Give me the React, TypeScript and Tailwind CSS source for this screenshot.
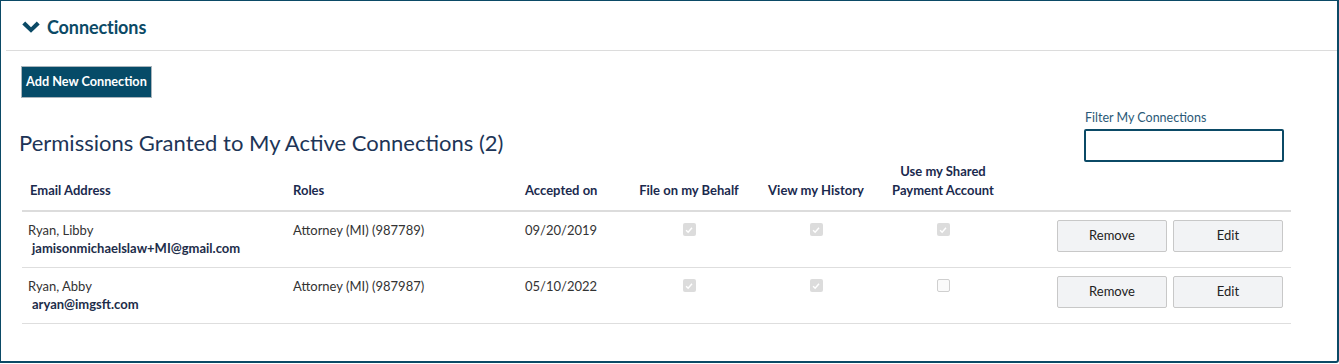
type Connection = {
  name: string;
  email: string;
  role: string;
  accepted: string;
  file: boolean;
  history: boolean;
  payment: boolean;
};

const connections: Connection[] = [
  {
    name: "Ryan, Libby",
    email: "jamisonmichaelslaw+MI@gmail.com",
    role: "Attorney (MI) (987789)",
    accepted: "09/20/2019",
    file: true,
    history: true,
    payment: true,
  },
  {
    name: "Ryan, Abby",
    email: "aryan@imgsft.com",
    role: "Attorney (MI) (987987)",
    accepted: "05/10/2022",
    file: true,
    history: true,
    payment: false,
  },
];

const Check = ({ checked }: { checked: boolean }) =>
  checked ? (
    <span className="flex w-[13px] h-[13px] rounded-[2px] bg-[#dcdcdc] items-center justify-center">
      <svg viewBox="0 0 12 12" className="w-[10px] h-[10px]">
        <path d="M2.5 6.2 L5 8.6 L9.6 3.4" fill="none" stroke="#ffffff" strokeWidth="1.8" />
      </svg>
    </span>
  ) : (
    <span className="block w-[13px] h-[13px] rounded-[2px] border border-[#cfcfcf] bg-[#fafafa]" />
  );

const Chevron = () => (
  <svg viewBox="0 0 18 12" className="w-[18px] h-[12px]">
    <path d="M0.3 3.4 L3.2 0.5 L9 6.2 L14.8 0.5 L17.7 3.4 L9 11.8 Z" fill="#0b4a66" />
  </svg>
);

export default function App() {
  return (
    <main className="w-[1339px] h-[364px] bg-white font-['Lato','Liberation_Sans',sans-serif]">
      <div className="h-[363px] border-2 border-[#0b4a66] border-t border-l rounded-br-[3px]">
        {/* Header */}
        <div className="ml-[5px] h-[50px] border-b border-[#dcdcdc] flex items-center pl-[16px] pt-[3px]">
          <Chevron />
          <h2 className="ml-[7px] text-[18px] font-bold text-[#0b4a66] tracking-[-0.1px]">
            Connections
          </h2>
        </div>

        <div className="px-[17px] pt-[15px]">
          <button className="ml-[3px] h-[32px] px-[4px] bg-[#064b68] border border-[#a9b4bb] text-white text-[12.7px] font-bold">
            Add New Connection
          </button>

          <div className="flex items-end justify-between">
            <h1 className="text-[22px] text-[#1d3557] pb-[3px] ml-[1px]">
              Permissions Granted to My Active Connections (2)
            </h1>
            <div className="mr-[36px] flex flex-col mt-[10px]">
              <label className="text-[12.5px] text-[#2b5a78] pl-[1px] mb-[1px] leading-[20px]">
                Filter My Connections
              </label>
              <input className="w-[200px] h-[33px] border-2 border-[#0b4a66] rounded-[2px] outline-none px-2" />
            </div>
          </div>

          <table className="ml-[4px] w-[1269px] table-fixed border-collapse text-[13px] text-[#1d2d4a]">
            <colgroup>
              <col className="w-[263px]" />
              <col className="w-[232px]" />
              <col className="w-[104px]" />
              <col className="w-[136px]" />
              <col className="w-[118px]" />
              <col className="w-[136px]" />
              <col className="w-[280px]" />
            </colgroup>
            <thead>
              <tr className="border-b-2 border-[#dcdcdc] text-[#1b2a4e] leading-[19px]">
                <th className="text-left pl-[8px] pb-[10px] align-bottom font-bold">Email Address</th>
                <th className="text-left pl-[8px] pb-[10px] align-bottom font-bold">Roles</th>
                <th className="text-left pl-[8px] pb-[10px] align-bottom font-bold">Accepted on</th>
                <th className="text-center pb-[10px] align-bottom font-bold">File on my Behalf</th>
                <th className="text-center pb-[10px] align-bottom font-bold">View my History</th>
                <th className="text-center pb-[10px] align-bottom font-bold">
                  Use my Shared
                  <br />
                  Payment Account
                </th>
                <th />
              </tr>
            </thead>
            <tbody>
              {connections.map((c) => (
                <tr key={c.email} className="border-b border-[#dedede] align-top">
                  <td className="pl-[6px] pt-[9px] pb-[9px]">
                    <div className="text-[#333] leading-[18px]">{c.name}</div>
                    <div className="pl-[4px] font-bold text-[#1d2d4a] leading-[19px]">{c.email}</div>
                  </td>
                  <td className="pl-[8px] pt-[9px] text-[#333] leading-[18px]">{c.role}</td>
                  <td className="pl-[8px] pt-[9px] text-[#333] leading-[18px]">{c.accepted}</td>
                  <td className="pt-[11px]">
                    <div className="flex justify-center">
                      <Check checked={c.file} />
                    </div>
                  </td>
                  <td className="pt-[11px]">
                    <div className="flex justify-center">
                      <Check checked={c.history} />
                    </div>
                  </td>
                  <td className="pt-[11px]">
                    <div className="flex justify-center">
                      <Check checked={c.payment} />
                    </div>
                  </td>
                  <td className="pt-[8px] pr-[8px]">
                    <div className="flex justify-end gap-[6px]">
                      <button className="w-[110px] h-[32px] bg-[#f2f3f5] border border-[#c8c8c8] rounded-[2px] text-[13px] text-[#222]">
                        Remove
                      </button>
                      <button className="w-[110px] h-[32px] bg-[#f2f3f5] border border-[#c8c8c8] rounded-[2px] text-[13px] text-[#222]">
                        Edit
                      </button>
                    </div>
                  </td>
                </tr>
              ))}
            </tbody>
          </table>
        </div>
      </div>
    </main>
  );
}
